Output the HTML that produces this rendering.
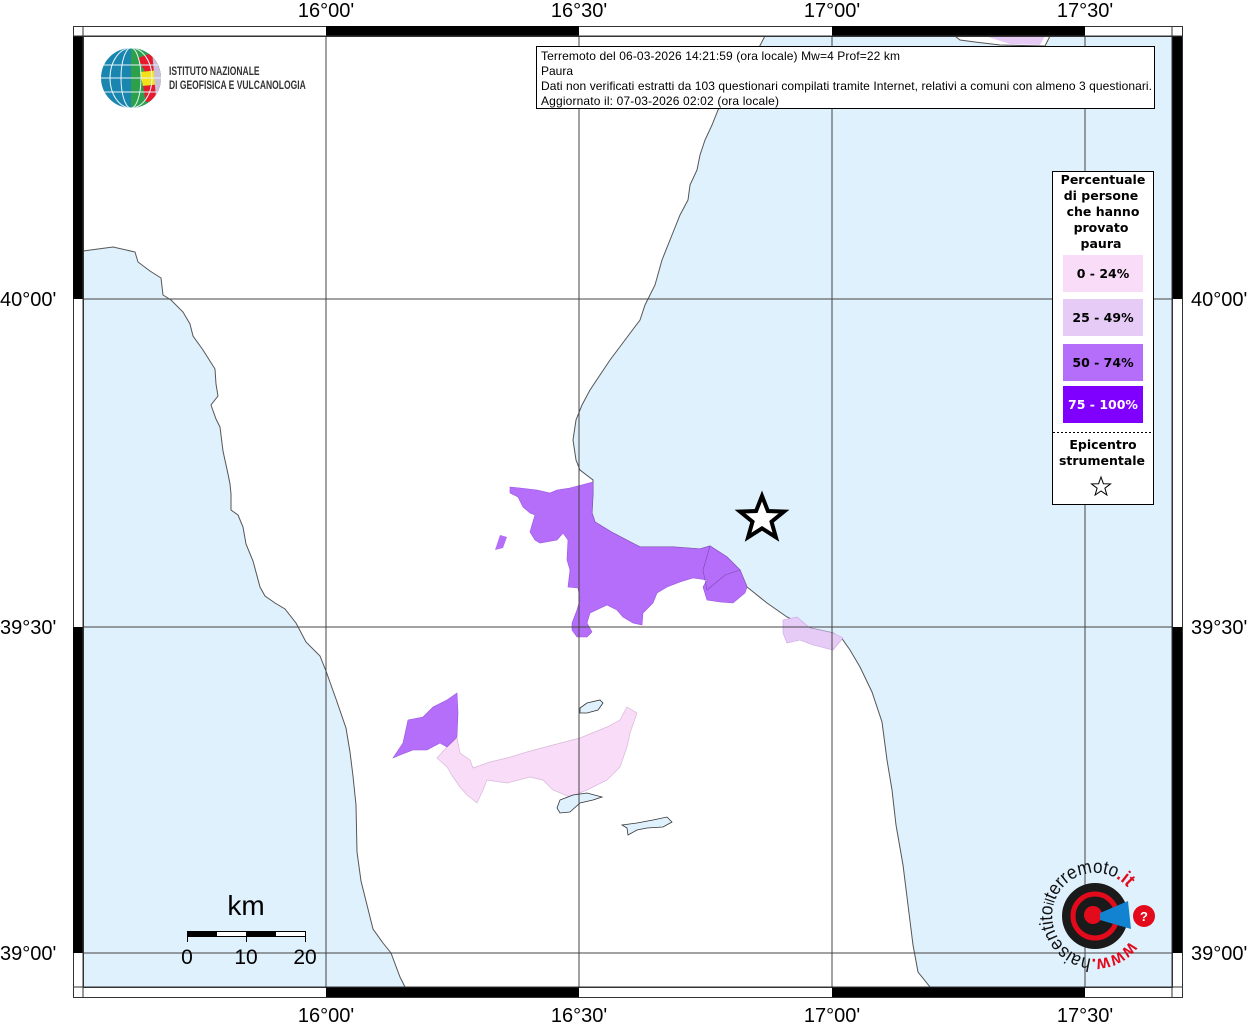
<!DOCTYPE html>
<html><head><meta charset="utf-8"><style>
html,body{margin:0;padding:0;background:#fff;}
svg{display:block;}
</style></head><body>
<svg width="1255" height="1024" viewBox="0 0 1255 1024" xmlns="http://www.w3.org/2000/svg" font-family="Liberation Sans, sans-serif">
<rect x="0" y="0" width="1255" height="1024" fill="#fff"/>
<rect x="83" y="36" width="1089" height="951" fill="#dff1fd"/>
<path d="M83,251 L113,247 L135,252 L138,262 L150,271 L161,278 L163,295 L171,300 L183,312 L190,324 L193,336 L203,350 L215,369 L216,384 L218,396 L211,405 L216,419 L220,427 L223,451 L228,474 L230,484 L231,494 L231,510 L238,515 L243,527 L246,544 L253,561 L260,587 L265,596 L275,603 L285,609 L296,623 L306,642 L320,656 L326,671 L336,699 L346,728 L350,752 L353,776 L356,805 L357,852 L361,881 L366,901 L373,929 L383,943 L391,953 L400,977 L405,987 L930,987 L918,972 L913,945 L908,905 L903,865 L896,825 L892,790 L887,760 L882,722 L872,692 L860,667 L850,650 L843,640 L833,633 L810,628 L787,617 L767,603 L747,587 L740,570 L727,557 L710,546 L700,549 L673,547 L640,547 L613,533 L595,522 L592,513 L593,493 L593,480 L580,470 L576,460 L573,440 L576,420 L582,405 L590,390 L600,375 L610,360 L625,340 L640,320 L645,305 L655,285 L662,260 L672,235 L680,215 L688,200 L690,185 L697,170 L700,155 L705,140 L712,125 L718,110 L740,80 L755,55 L765,36 L83,36 Z" fill="#fff" stroke="#555" stroke-width="1"/>
<path d="M955,36 L1050,36 L1045,46 L1000,45 L975,42 L960,40 Z" fill="#fff" stroke="#555" stroke-width="1"/>
<path d="M985,36 L1045,36 L1040,45 L1010,44 Z" fill="#e6cbf6"/>
<path d="M510,487 L520,488 L537,490 L550,493 L557,490 L570,488 L593,482 L593,493 L592,513 L595,522 L613,533 L640,547 L673,547 L700,549 L710,546 L727,557 L740,570 L747,587 L745,593 L733,603 L720,602 L707,600 L703,587 L707,580 L693,578 L680,582 L667,587 L657,593 L653,603 L643,613 L642,625 L633,623 L623,617 L617,610 L607,605 L590,613 L587,623 L592,632 L587,637 L577,637 L572,630 L572,623 L577,610 L580,600 L578,588 L568,587 L570,570 L567,560 L568,540 L563,533 L557,540 L540,543 L535,540 L530,532 L532,525 L535,515 L530,513 L523,507 L518,497 L510,493 Z" fill="#b56efa" stroke="#9a55e0" stroke-width="0.6"/>
<path d="M710,546 L703,570 L707,590 M707,590 L725,575 L740,570" fill="none" stroke="#7a4ab0" stroke-width="0.6"/>
<path d="M495,550 L500,535 L507,537 L503,548 Z" fill="#b56efa"/>
<path d="M783,620 L797,617 L810,628 L833,633 L843,638 L833,650 L813,645 L800,640 L787,643 L783,633 Z" fill="#e6cbf6" stroke="#c9a6e6" stroke-width="0.6"/>
<path d="M437,758 L447,747 L457,738 L460,753 L470,760 L473,768 L490,762 L507,758 L527,752 L553,745 L580,738 L607,727 L620,720 L627,707 L637,713 L630,733 L627,747 L620,767 L607,780 L587,790 L570,797 L553,790 L543,780 L530,777 L507,783 L487,780 L483,790 L477,803 L467,795 L460,787 L453,777 L447,767 Z" fill="#f8dcf8" stroke="#d8b8d8" stroke-width="0.7"/>
<path d="M393,758 L403,743 L408,720 L423,717 L433,707 L447,700 L457,693 L458,713 L457,737 L447,747 L440,743 L427,750 L413,750 L400,755 Z" fill="#b56efa" stroke="#9a55e0" stroke-width="0.6"/>
<path d="M580,708 L587,703 L600,700 L603,703 L598,710 L587,713 L580,713 Z" fill="#dff1fd" stroke="#333" stroke-width="0.8"/>
<path d="M560,800 L573,795 L587,793 L602,797 L593,800 L580,803 L570,812 L560,813 L557,808 Z" fill="#dff1fd" stroke="#333" stroke-width="0.8"/>
<path d="M622,825 L637,823 L653,820 L667,817 L672,822 L663,827 L647,828 L637,830 L628,835 L627,828 Z" fill="#dff1fd" stroke="#333" stroke-width="0.8"/>
<g stroke="#444" stroke-width="1">
<line x1="326" y1="36" x2="326" y2="987"/><line x1="579" y1="36" x2="579" y2="987"/>
<line x1="832" y1="36" x2="832" y2="987"/><line x1="1085" y1="36" x2="1085" y2="987"/>
<line x1="83" y1="299" x2="1172" y2="299"/><line x1="83" y1="627" x2="1172" y2="627"/>
<line x1="83" y1="953" x2="1172" y2="953"/>
</g>
<g stroke="#333" stroke-width="1">
<rect x="73.5" y="26.5" width="1109" height="971" fill="none"/>
<rect x="83.5" y="36.5" width="1089" height="951" fill="none"/>
</g>
<g fill="#000">
<rect x="326" y="26" width="253" height="10"/><rect x="832" y="26" width="253" height="10"/>
<rect x="326" y="987" width="253" height="10"/><rect x="832" y="987" width="253" height="10"/>
<rect x="73" y="36" width="10" height="263"/><rect x="73" y="627" width="10" height="326"/>
<rect x="1172" y="36" width="10" height="263"/><rect x="1172" y="627" width="10" height="326"/>
</g>
<g stroke="#333" stroke-width="1">
<line x1="1172" y1="26" x2="1172" y2="997"/><line x1="83" y1="26" x2="83" y2="997"/>
<line x1="73" y1="987" x2="1182" y2="987"/><line x1="73" y1="36" x2="1182" y2="36"/>
</g>
<g font-size="20" fill="#000" text-anchor="middle">
<text x="326" y="17">16°00'</text><text x="579" y="17">16°30'</text><text x="832" y="17">17°00'</text><text x="1085" y="17">17°30'</text>
<text x="326" y="1022">16°00'</text><text x="579" y="1022">16°30'</text><text x="832" y="1022">17°00'</text><text x="1085" y="1022">17°30'</text>
</g>
<g font-size="20" fill="#000">
<text x="0" y="306">40°00'</text><text x="0" y="634">39°30'</text><text x="0" y="960">39°00'</text>
<text x="1191" y="306">40°00'</text><text x="1191" y="634">39°30'</text><text x="1191" y="960">39°00'</text>
</g>
<defs><clipPath id="g"><circle cx="131" cy="78" r="30"/></clipPath></defs>
<g clip-path="url(#g)">
<rect x="100" y="46" width="62" height="64" fill="#1a86b0"/>
<path d="M131,48 L162,48 L162,110 L131,110 Z" fill="#2ca04a"/>
<path d="M138,58 L155,52 L162,70 L145,72 Z" fill="#e8192c"/>
<path d="M140,72 L160,70 L162,84 L143,86 Z" fill="#f3e21a"/>
<path d="M143,86 L162,84 L160,100 L146,102 Z" fill="#e8192c"/>
<path d="M152,50 L162,50 L162,110 L157,110 Z" fill="#c8c0d8"/>
<g stroke="#e8f4fa" stroke-width="1" fill="none">
<ellipse cx="131" cy="78" rx="10" ry="30"/><ellipse cx="131" cy="78" rx="21" ry="30"/>
<line x1="100" y1="65" x2="162" y2="65"/><line x1="100" y1="78" x2="162" y2="78"/><line x1="100" y1="92" x2="162" y2="92"/>
</g>
</g>
<g font-size="12" font-weight="bold" fill="#333" transform="scale(0.71,1)">
<text x="238" y="75">ISTITUTO NAZIONALE</text>
<text x="238" y="89">DI GEOFISICA E VULCANOLOGIA</text>
</g>
<rect x="536.5" y="46.5" width="618" height="62" fill="#fff" stroke="#000"/>
<g font-size="12" fill="#000">
<text x="541" y="60" textLength="359">Terremoto del 06-03-2026 14:21:59 (ora locale) Mw=4 Prof=22 km</text>
<text x="541" y="75">Paura</text>
<text x="541" y="90" textLength="611">Dati non verificati estratti da 103 questionari compilati tramite Internet, relativi a comuni con almeno 3 questionari.</text>
<text x="541" y="105" textLength="238">Aggiornato il: 07-03-2026 02:02 (ora locale)</text>
</g>
<rect x="1052.5" y="171.5" width="101" height="333" fill="#fff" stroke="#000"/>
<g font-family="DejaVu Sans, sans-serif" font-weight="bold" font-size="12.5" text-anchor="middle" fill="#000">
<text x="1103" y="184">Percentuale</text><text x="1101" y="200">di persone</text><text x="1103" y="216">che hanno</text>
<text x="1101" y="232">provato</text><text x="1101" y="248">paura</text>
<rect x="1063" y="255" width="80" height="37" fill="#f8dcf8"/><text x="1103" y="278">0 - 24%</text>
<rect x="1063" y="299" width="80" height="37" fill="#e6cbf6"/><text x="1103" y="322">25 - 49%</text>
<rect x="1063" y="344" width="80" height="37" fill="#b56efa"/><text x="1103" y="367">50 - 74%</text>
<rect x="1063" y="386" width="80" height="37" fill="#8000ff"/><text x="1103" y="409" fill="#fff">75 - 100%</text>
<text x="1103" y="449">Epicentro</text><text x="1102" y="465">strumentale</text>
</g>
<line x1="1053" y1="432.5" x2="1153" y2="432.5" stroke="#000" stroke-dasharray="2,2"/>
<path d="M1101,477 L1103.4,483.7 L1110.5,483.9 L1104.9,488.2 L1106.9,495 L1101,491 L1095.1,495 L1097.1,488.2 L1091.5,483.9 L1098.6,483.7 Z" fill="#fff" stroke="#000" stroke-width="1"/>
<path d="M762,496 L767.9,511 L784,511.6 L771.5,521.7 L775.9,537.2 L762,528.4 L748.1,537.2 L752.5,521.7 L740,511.6 L756.1,511 Z" fill="#fff" stroke="#000" stroke-width="4"/>
<text x="246" y="915" font-size="28" text-anchor="middle" fill="#000">km</text>
<rect x="187.5" y="931.5" width="118" height="5" fill="#fff" stroke="#000"/>
<rect x="187" y="931" width="30" height="6" fill="#000"/><rect x="246" y="931" width="30" height="6" fill="#000"/>
<g stroke="#000"><line x1="187.5" y1="931" x2="187.5" y2="942"/><line x1="246.5" y1="931" x2="246.5" y2="942"/><line x1="305.5" y1="931" x2="305.5" y2="942"/></g>
<g font-size="21" text-anchor="middle" fill="#000"><text x="187" y="964">0</text><text x="246" y="964">10</text><text x="305" y="964">20</text></g>
<circle cx="1095" cy="916" r="33" fill="#1a1a1a"/>
<circle cx="1095" cy="916" r="22" fill="none" stroke="#e30a1c" stroke-width="5"/>
<circle cx="1093" cy="915" r="9" fill="#e30a1c"/>
<path d="M1100,913 L1128,901 L1131,929 L1100,920 Z" fill="#1283d0"/>
<circle cx="1144" cy="916" r="11" fill="#e30a1c"/>
<text x="1144" y="921" font-size="13" font-weight="bold" fill="#fff" text-anchor="middle">?</text>
<defs><path id="arc" d="M1130,941 A43,43 0 1 1 1128,888"/></defs>
<text font-size="19" fill="#111"><textPath href="#arc" textLength="212" lengthAdjust="spacingAndGlyphs"><tspan fill="#e30a1c" font-weight="bold">www.</tspan>haisentito<tspan font-size="14">il</tspan>terremoto<tspan fill="#e30a1c" font-weight="bold">.it</tspan></textPath></text>
</svg>
</body></html>
